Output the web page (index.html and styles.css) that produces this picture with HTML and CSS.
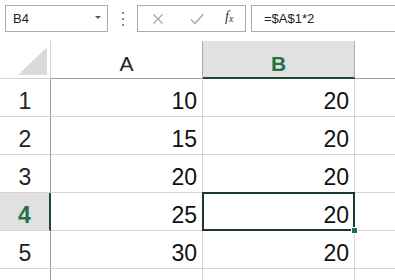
FILE: index.html
```html
<!DOCTYPE html>
<html lang="en">
<head>
    <meta charset="UTF-8">
    <title>Sheet</title>
    <link rel="stylesheet" href="styles.css">
</head>
<body>
    <div class="toolbar">
        <div class="name-box">
            <span>B4</span>
            <span class="arrow"></span>
        </div>
        <div class="grip"><i></i><i></i><i></i></div>
        <div class="buttons">
            <svg class="btn" width="12" height="12" viewBox="0 0 12 12"><path d="M1.5 1.5l9 9M10.5 1.5l-9 9" stroke="#a6a6a6" stroke-width="1.3" fill="none"/></svg>
            <svg class="btn" width="14" height="12" viewBox="0 0 14 12"><path d="M1 6.5l4 4L13 1.5" stroke="#a6a6a6" stroke-width="1.4" fill="none"/></svg>
            <span class="fx">f<sub>x</sub></span>
        </div>
        <div class="formula">=$A$1*2</div>
    </div>

    <div class="sheet">
        <div class="corner"><span class="tri"></span></div>
        <div class="col-head">A</div>
        <div class="col-head active">B</div>
        <div class="col-head rest"></div>

        <div class="row-head">1</div>
        <div class="cell">10</div>
        <div class="cell">20</div>
        <div class="cell rest"></div>

        <div class="row-head">2</div>
        <div class="cell">15</div>
        <div class="cell">20</div>
        <div class="cell rest"></div>

        <div class="row-head">3</div>
        <div class="cell">20</div>
        <div class="cell">20</div>
        <div class="cell rest"></div>

        <div class="row-head active">4</div>
        <div class="cell">25</div>
        <div class="cell selected">20</div>
        <div class="cell rest"></div>

        <div class="row-head">5</div>
        <div class="cell">30</div>
        <div class="cell">20</div>
        <div class="cell rest"></div>

        <div class="row-head">6</div>
        <div class="cell"></div>
        <div class="cell"></div>
        <div class="cell rest"></div>
    </div>
</body>
</html>
```

FILE: styles.css
```css
body {
    margin: 0;
    background: #fff;
    font-family: "Liberation Sans", Arial, sans-serif;
    color: #1a1a1a;
    overflow: hidden;
}
.toolbar {
    display: flex;
    align-items: stretch;
    height: 27px;
    padding: 5px 0 0 5px;
}
.name-box {
    box-sizing: border-box;
    width: 103px;
    border: 1px solid #ababab;
    display: flex;
    align-items: center;
    justify-content: space-between;
    padding: 0 6px 0 7px;
    font-size: 13px;
    color: #222;
}
.arrow {
    width: 0;
    height: 0;
    border-left: 3px solid transparent;
    border-right: 3px solid transparent;
    border-top: 3px solid #555;
    margin-top: -2px;
}
.grip {
    width: 29px;
    display: flex;
    flex-direction: column;
    align-items: center;
    justify-content: center;
    gap: 4px;
}
.grip i {
    width: 2px;
    height: 2px;
    background: #8a8a8a;
}
.buttons {
    box-sizing: border-box;
    width: 109px;
    border: 1px solid #ababab;
    display: flex;
    align-items: center;
    padding-left: 14px;
}
.btn {
    margin-right: 26px;
}
.buttons .btn + .btn {
    margin-right: 21px;
}
.fx {
    font-family: "Liberation Serif", "Times New Roman", serif;
    font-style: italic;
    font-size: 14px;
    color: #333;
    margin-top: -3px;
}
.fx sub {
    font-size: 10px;
    vertical-align: -1px;
}
.formula {
    box-sizing: border-box;
    flex: 1;
    margin-left: 5px;
    margin-right: -2px;
    border: 1px solid #ababab;
    display: flex;
    align-items: center;
    padding-left: 12px;
    font-size: 13px;
    color: #222;
}
.sheet {
    margin-top: 9px;
    display: grid;
    grid-template-columns: 51px 152px 152px 1fr;
    grid-auto-rows: 38px;
}
.sheet > div {
    box-sizing: border-box;
    border-right: 1px solid #d4d4d4;
    border-bottom: 1px solid #d4d4d4;
}
.corner {
    position: relative;
}
.tri {
    position: absolute;
    right: 3px;
    bottom: 3px;
    width: 29px;
    height: 28px;
    background: #dadada;
    clip-path: polygon(100% 0, 100% 100%, 0 100%);
}
.sheet > .col-head {
    border-right-color: #ababab;
    border-bottom-color: #9e9e9e;
    display: flex;
    align-items: flex-end;
    justify-content: center;
    padding-bottom: 2px;
    font-size: 21px;
    line-height: 24px;
    color: #222;
}
.sheet > .col-head.rest {
    border-right: none;
}
.sheet > .col-head.active {
    background: #e1e1e1;
    border-bottom: 2px solid #1c4a2c;
    padding-bottom: 1px;
    color: #217346;
    font-weight: bold;
}
.sheet > .row-head {
    border-right-color: #9e9e9e;
    display: flex;
    align-items: flex-end;
    justify-content: center;
    padding-bottom: 2px;
    font-size: 23px;
    line-height: 26px;
    color: #222;
}
.sheet > .row-head.active {
    background: #e1e1e1;
    border-right: 2px solid #1c4a2c;
    color: #217346;
    font-weight: bold;
}
.cell {
    display: flex;
    align-items: flex-end;
    justify-content: flex-end;
    padding: 0 5px 2px 0;
    font-size: 23px;
    line-height: 26px;
    color: #111;
}
.sheet > .cell.rest {
    border-right: none;
}
.selected {
    position: relative;
}
.selected::after {
    content: "";
    position: absolute;
    top: -1px;
    left: -1px;
    right: -1px;
    bottom: -1px;
    border: 2px solid #1c3a26;
}
.selected::before {
    content: "";
    position: absolute;
    right: -4px;
    bottom: -4px;
    width: 5px;
    height: 5px;
    background: #217346;
    border: 1px solid #fff;
    z-index: 1;
}
```
